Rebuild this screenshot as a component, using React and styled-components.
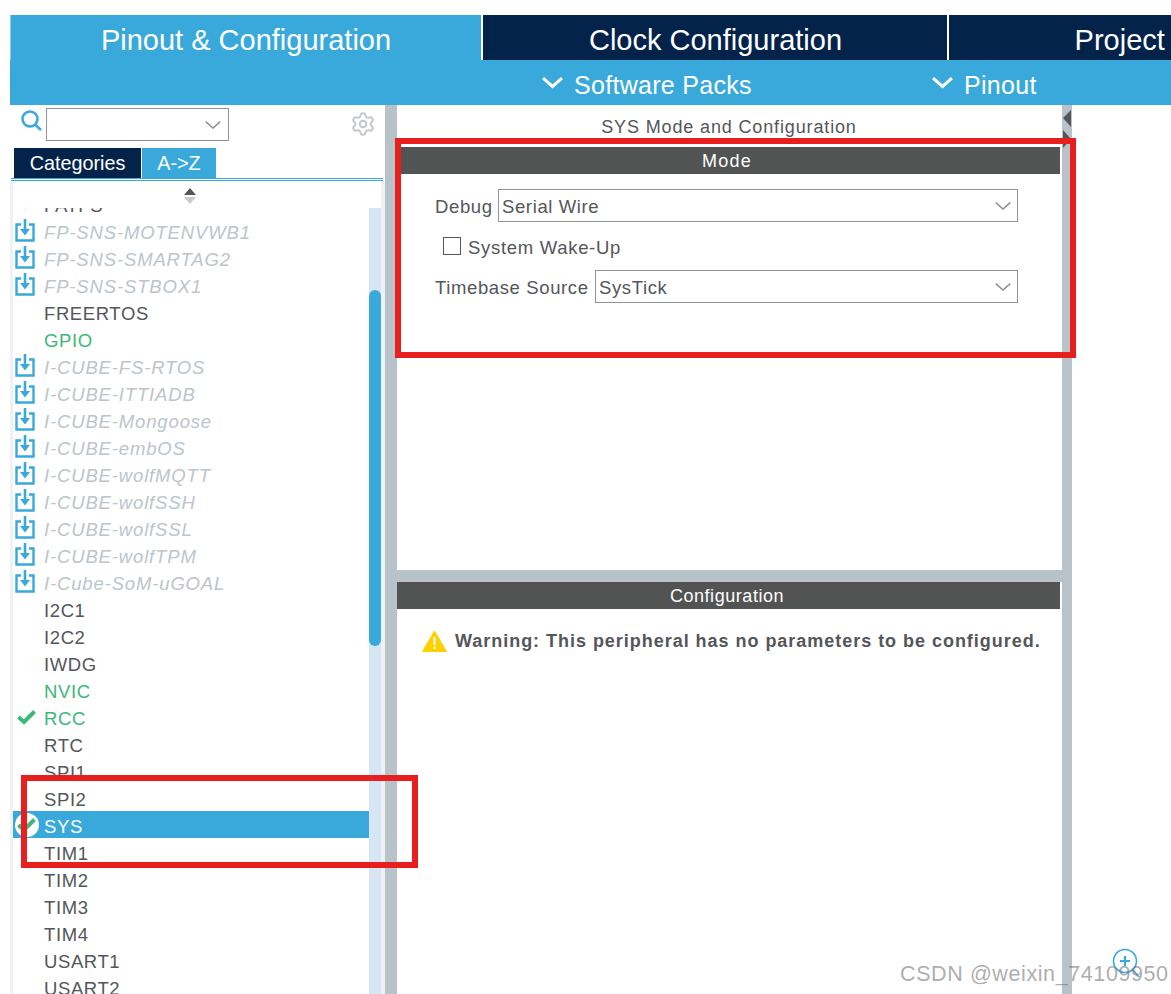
import React from "react";
import styled, { createGlobalStyle } from "styled-components";
import { Settings } from "lucide-react";

const Global = createGlobalStyle`
  html, body {
    margin: 0;
    padding: 0;
    background: #fff;
    font-family: "Liberation Sans", Arial, sans-serif;
  }
`;

const Page = styled.div`
  position: relative;
  width: 1171px;
  height: 994px;
  padding: 15px 0 0 10px;
  box-sizing: border-box;
  overflow: hidden;
  background: #fff;
`;

// header

const TabBar = styled.div`
  display: flex;
  height: 45px;
  width: 1400px;
`;

const TopTab = styled.div`
  width: ${(p) => p.$width}px;
  flex: none;
  margin-right: 2px;
  padding-top: 5px;
  box-sizing: border-box;
  display: flex;
  align-items: center;
  justify-content: center;
  color: #fff;
  font-size: 29px;
  white-space: nowrap;
  background: ${(p) => (p.$active ? "#39a9dc" : "#03234b")};
  border-left: 1px solid ${(p) => (p.$active ? "#8ccbea" : "transparent")};
`;

const SubBar = styled.div`
  height: 45px;
  display: flex;
  align-items: center;
  padding-left: 532px;
  background: #39a9dc;
  color: #fff;
  font-size: 25px;
`;

const SubItem = styled.div`
  width: ${(p) => p.$width}px;
  display: flex;
  align-items: center;
  gap: 11px;
  letter-spacing: 0.3px;
  line-height: 34px;
  padding-top: 4px;
  box-sizing: border-box;

  svg {
    margin-top: -4px;
  }
`;

// body

const Body = styled.div`
  display: flex;
  height: 889px;
`;

const Sidebar = styled.div`
  width: 375px;
  flex: none;
  display: flex;
  flex-direction: column;
`;

const SearchRow = styled.div`
  height: 43px;
  flex: none;
  display: flex;
  align-items: flex-start;
  padding: 3px 0 0 10px;
  box-sizing: border-box;
  position: relative;
`;

const SearchBox = styled.div`
  width: 183px;
  height: 33px;
  margin-left: 4px;
  box-sizing: border-box;
  border: 1px solid #8f9498;
  display: flex;
  align-items: center;
  justify-content: flex-end;
  padding-right: 7px;
`;

const Gear = styled(Settings)`
  margin: 3px 0 0 121px;
  color: #c4c6c8;
`;

const SideTabs = styled.div`
  height: 30px;
  flex: none;
  display: flex;
  gap: 1px;
  padding-left: 4px;
`;

const SideTab = styled.div`
  width: ${(p) => p.$width}px;
  display: flex;
  align-items: center;
  justify-content: center;
  color: #fff;
  font-size: 19.8px;
  background: ${(p) => (p.$active ? "#39a9dc" : "#03234b")};
`;

const SideRule = styled.div`
  height: 3px;
  flex: none;
  margin: 0 2px 0 1px;
  box-sizing: border-box;
  border-top: 1px solid #39a9dc;
  border-bottom: 1px solid #39a9dc;
`;

const SideInner = styled.div`
  flex: 1;
  min-height: 0;
  display: flex;
  flex-direction: column;
  border-left: 3px solid #f0f1f2;
  border-right: 4px solid #f0f1f2;
`;

const ScrollArrows = styled.div`
  height: 27px;
  flex: none;
  display: flex;
  align-items: center;
  justify-content: center;
  padding: 2px 14px 0 0;
  box-sizing: border-box;
`;

const ListArea = styled.div`
  flex: 1;
  min-height: 0;
  display: flex;
  overflow: hidden;
`;

const List = styled.div`
  flex: 1;
  margin-top: -18px;
`;

const Row = styled.div`
  height: 27px;
  display: flex;
  align-items: center;
  font-size: 18.5px;
  letter-spacing: ${(p) => (p.$kind === "pack" ? "0.85px" : "0.6px")};
  white-space: nowrap;
  padding-top: 4px;
  box-sizing: border-box;
  font-style: ${(p) => (p.$kind === "pack" ? "italic" : "normal")};
  background: ${(p) => (p.$selected ? "#39a9dc" : "transparent")};
  color: ${(p) =>
    p.$selected
      ? "#fff"
      : p.$kind === "pack"
      ? "#bcc4cc"
      : p.$kind === "ok"
      ? "#3cb878"
      : "#54565a"};
`;

const RowIcon = styled.span`
  width: 31px;
  height: 24px;
  margin-top: -4px;
  flex: none;
  display: flex;
  align-items: center;
  padding-left: 2px;
  box-sizing: border-box;
`;

const Track = styled.div`
  width: 12px;
  flex: none;
  background: #d6e6f4;
`;

const Thumb = styled.div`
  height: 356px;
  margin-top: 82px;
  border-radius: 6px;
  background: #39a9dc;
`;

const VSplit = styled.div`
  width: ${(p) => p.$width}px;
  flex: none;
  background: #b7c2c9;
  display: flex;
  flex-direction: column;
  align-items: center;
`;

const Main = styled.div`
  width: 665px;
  flex: none;
  display: flex;
  flex-direction: column;
  color: #54565a;
`;

const MainTitle = styled.div`
  height: 42px;
  flex: none;
  display: flex;
  align-items: center;
  justify-content: center;
  padding: 2px 1px 0 0;
  box-sizing: border-box;
  font-size: 18px;
  letter-spacing: 0.86px;
`;

const SectionHead = styled.div`
  height: 27px;
  flex: none;
  margin-right: 2px;
  padding: 2px 3px 0 0;
  box-sizing: border-box;
  display: flex;
  align-items: center;
  justify-content: center;
  background: #525453;
  color: #fff;
  font-size: 18px;
  letter-spacing: ${(p) => p.$spacing}px;
`;

const ModeBody = styled.div`
  height: 396px;
  flex: none;
  padding: 15px 0 0 38px;
  box-sizing: border-box;
  display: flex;
  flex-direction: column;
`;

const FieldRow = styled.div`
  display: flex;
  align-items: center;
  height: 33px;
  font-size: 18.5px;
  letter-spacing: 0.62px;
  white-space: nowrap;
`;

const FieldLabel = styled.span`
  padding-top: 2px;
`;

const Field = styled.div`
  width: ${(p) => p.$width}px;
  height: 33px;
  margin-left: auto;
  margin-right: 44px;
  flex: none;
  box-sizing: border-box;
  border: 1px solid #8f9498;
  padding: 2px 6px 0 3px;
  display: flex;
  align-items: center;
  justify-content: space-between;

  svg {
    margin-top: -2px;
  }
`;

const CheckRow = styled.div`
  display: flex;
  align-items: center;
  height: 18px;
  margin: 15px 0 15px 8px;
  gap: 7px;
  font-size: 18.5px;
  letter-spacing: 0.7px;
`;

const CheckLabel = styled.span`
  padding-top: 3px;
`;

const CheckBox = styled.span`
  width: 18px;
  height: 18px;
  box-sizing: border-box;
  border: 1px solid #54565a;
`;

const HSplit = styled.div`
  height: 12px;
  flex: none;
  background: #b7c2c9;
`;

const WarningRow = styled.div`
  display: flex;
  align-items: center;
  gap: 8px;
  padding: 20px 0 0 25px;
  font-size: 18px;
  font-weight: bold;
  letter-spacing: 0.97px;
  white-space: nowrap;
`;

const WarningText = styled.span`
  padding-top: 2px;
`;

// annotations lying over the screenshot

const RedBox = styled.div`
  position: absolute;
  left: ${(p) => p.$x}px;
  top: ${(p) => p.$y}px;
  width: ${(p) => p.$w}px;
  height: ${(p) => p.$h}px;
  box-sizing: border-box;
  border: 6px solid #e71f1f;
`;

const ZoomIcon = styled.svg`
  position: absolute;
  left: 1111px;
  top: 948px;
`;

const Watermark = styled.div`
  position: absolute;
  left: 900px;
  top: 962px;
  font-size: 21.5px;
  letter-spacing: 0.6px;
  color: rgba(120, 120, 120, 0.62);
  white-space: nowrap;
`;

const Chevron = ({ size = 16, color = "#8f9498", width = 1.6 }) => (
  <svg width={size} height={size * 0.6} viewBox="0 0 20 12" fill="none">
    <path d="M1 2l9 8 9-8" stroke={color} strokeWidth={(width * 20) / size} />
  </svg>
);

const SearchGlyph = () => (
  <svg width="22" height="24" viewBox="0 0 22 24" fill="none" stroke="#39a9dc">
    <circle cx="10" cy="11" r="7.5" strokeWidth="2.6" />
    <path d="M15.5 17l5.5 5" strokeWidth="2.6" />
  </svg>
);

const PackGlyph = () => (
  <svg width="20" height="23" viewBox="0 0 20 23" fill="none" stroke="#39a9dc">
    <path d="M6 5.5H1.5v16h17v-16H14" strokeWidth="2.4" />
    <path d="M10 0v14" strokeWidth="2.6" />
    <path d="M5 10h10l-5 6.5z" fill="#39a9dc" stroke="none" />
  </svg>
);

const CheckGlyph = ({ round }) => (
  <svg width="24" height="24" viewBox="0 0 24 24" fill="none">
    {round && <circle cx="12" cy="12" r="12" fill="#fff" />}
    <path d="M3.5 12l5.5 5L19.5 6.5" stroke="#3cb878" strokeWidth="4" />
  </svg>
);

const WarnGlyph = () => (
  <svg width="25" height="22" viewBox="0 0 25 22">
    <path d="M12.5 1L24.5 21.5H.5z" fill="#fdd000" stroke="#fdd000" strokeLinejoin="round" />
    <path d="M12.5 7v8M12.5 16.5v2.5" stroke="#fff" strokeWidth="2" />
  </svg>
);

const items = [
  { name: "FATFS" },
  { name: "FP-SNS-MOTENVWB1", kind: "pack" },
  { name: "FP-SNS-SMARTAG2", kind: "pack" },
  { name: "FP-SNS-STBOX1", kind: "pack" },
  { name: "FREERTOS" },
  { name: "GPIO", kind: "ok" },
  { name: "I-CUBE-FS-RTOS", kind: "pack" },
  { name: "I-CUBE-ITTIADB", kind: "pack" },
  { name: "I-CUBE-Mongoose", kind: "pack" },
  { name: "I-CUBE-embOS", kind: "pack" },
  { name: "I-CUBE-wolfMQTT", kind: "pack" },
  { name: "I-CUBE-wolfSSH", kind: "pack" },
  { name: "I-CUBE-wolfSSL", kind: "pack" },
  { name: "I-CUBE-wolfTPM", kind: "pack" },
  { name: "I-Cube-SoM-uGOAL", kind: "pack" },
  { name: "I2C1" },
  { name: "I2C2" },
  { name: "IWDG" },
  { name: "NVIC", kind: "ok" },
  { name: "RCC", kind: "ok", checked: true },
  { name: "RTC" },
  { name: "SPI1" },
  { name: "SPI2" },
  { name: "SYS", selected: true, checked: true },
  { name: "TIM1" },
  { name: "TIM2" },
  { name: "TIM3" },
  { name: "TIM4" },
  { name: "USART1" },
  { name: "USART2" },
];

const App = () => {
  return (
    <Page>
      <Global />
      <TabBar>
        <TopTab $width={471} $active>
          Pinout &amp; Configuration
        </TopTab>
        <TopTab $width={464}>Clock Configuration</TopTab>
        <TopTab $width={463}>Project Manager</TopTab>
      </TabBar>
      <SubBar>
        <SubItem $width={390}>
          <Chevron size={21} color="#fff" width={3} />
          Software Packs
        </SubItem>
        <SubItem $width={200}>
          <Chevron size={21} color="#fff" width={3} />
          Pinout
        </SubItem>
      </SubBar>
      <Body>
        <Sidebar>
          <SearchRow>
            <SearchGlyph />
            <SearchBox>
              <Chevron />
            </SearchBox>
            <Gear size={26} strokeWidth={1.8} />
          </SearchRow>
          <SideTabs>
            <SideTab $width={127}>Categories</SideTab>
            <SideTab $width={74} $active>
              A-&gt;Z
            </SideTab>
          </SideTabs>
          <SideRule />
          <SideInner>
            <ScrollArrows>
              <svg width="14" height="18" viewBox="0 0 14 18">
                <path d="M7 1l6 7H1z" fill="#54565a" />
                <path d="M1 10h12l-6 7z" fill="#c9cbcd" />
              </svg>
            </ScrollArrows>
            <ListArea>
              <List>
                {items.map((item) => (
                  <Row key={item.name} $kind={item.kind} $selected={item.selected}>
                    <RowIcon>
                      {item.kind === "pack" && <PackGlyph />}
                      {item.checked && <CheckGlyph round={item.selected} />}
                    </RowIcon>
                    {item.name}
                  </Row>
                ))}
              </List>
              <Track>
                <Thumb />
              </Track>
            </ListArea>
          </SideInner>
        </Sidebar>
        <VSplit $width={12} />
        <Main>
          <MainTitle>SYS Mode and Configuration</MainTitle>
          <SectionHead $spacing={1.3}>Mode</SectionHead>
          <ModeBody>
            <FieldRow>
              <FieldLabel>Debug</FieldLabel>
              <Field $width={520}>
                Serial Wire
                <Chevron />
              </Field>
            </FieldRow>
            <CheckRow>
              <CheckBox />
              <CheckLabel>System Wake-Up</CheckLabel>
            </CheckRow>
            <FieldRow>
              <FieldLabel>Timebase Source</FieldLabel>
              <Field $width={423}>
                SysTick
                <Chevron />
              </Field>
            </FieldRow>
          </ModeBody>
          <HSplit />
          <SectionHead $spacing={0.55}>Configuration</SectionHead>
          <WarningRow>
            <WarnGlyph />
            <WarningText>Warning: This peripheral has no parameters to be configured.</WarningText>
          </WarningRow>
        </Main>
        <VSplit $width={10}>
          <svg width="10" height="46" viewBox="0 0 10 46">
            <path d="M9 5v17L1 13z" fill="#54565a" />
            <path d="M1 25l8 9-8 9z" fill="#54565a" />
          </svg>
        </VSplit>
      </Body>

      <RedBox $x={395} $y={138} $w={681} $h={220} />
      <RedBox $x={21} $y={775} $w={397} $h={93} />
      <ZoomIcon width="30" height="32" viewBox="0 0 30 32" fill="none" stroke="#39a9dc">
        <circle cx="14" cy="13" r="11.5" strokeWidth="1.6" />
        <path d="M14 8v10M9 13h10" strokeWidth="2.2" />
        <path d="M22 22l6 7" strokeWidth="1.8" />
      </ZoomIcon>
      <Watermark>CSDN @weixin_74109950</Watermark>
    </Page>
  );
};

export default App;
